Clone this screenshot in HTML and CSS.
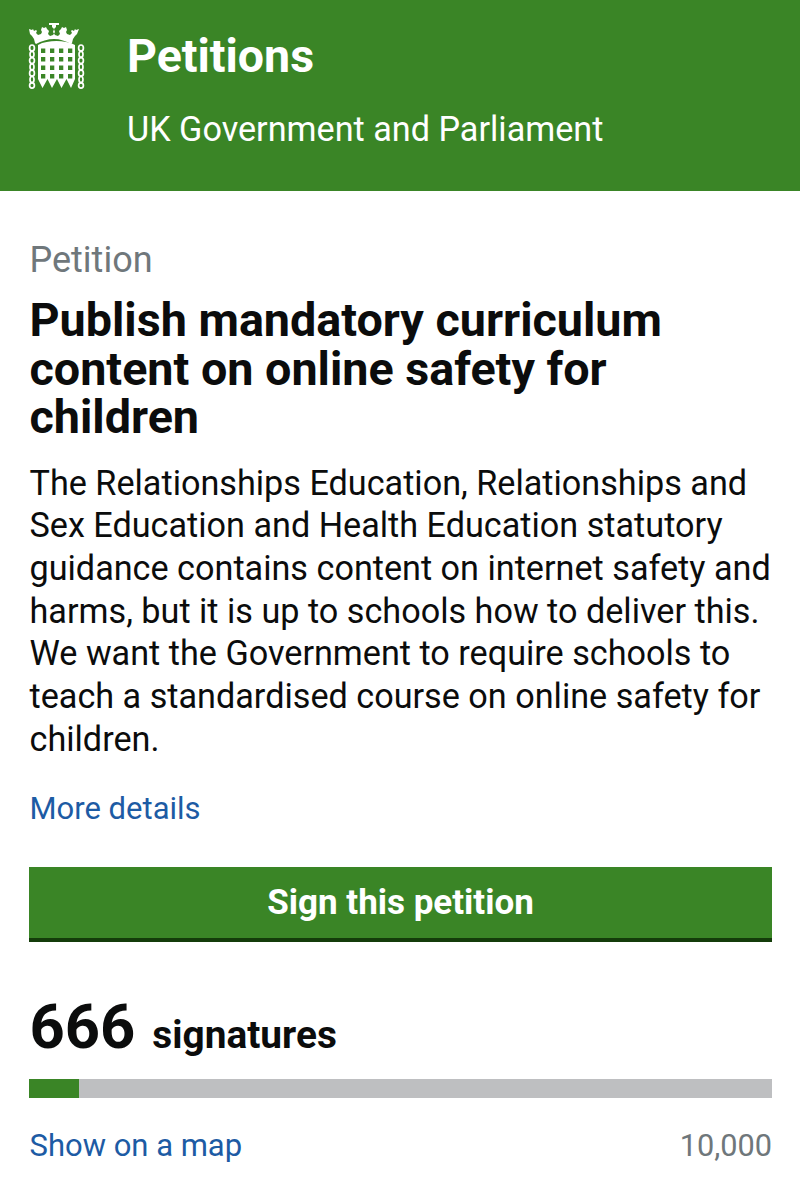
FILE: index.html
```html
<!DOCTYPE html>
<html lang="en">
<head>
<meta charset="utf-8">
<title>Petitions</title>
<link rel="stylesheet" href="styles.css">
</head>
<body>
<header class="site-header">
  <svg class="logo" viewBox="27 22 60 70" aria-hidden="true">
    <g fill="#fff">
      <path d="M29 29l3 1 1-1 1 2 2-1 1 1-1 2 2 2 3-1 1-2-1-2 1-3 2 1 2-1 1 2 2 2-1 3 2 2 3-1 2-3-1-3-2-2v-2h-3v-2h10v2h-3v2l-2 2-1 3 2 3 3 1 2-2-1-3 2-2 1-2 2 1 2-1 1 3-1 2 1 2 3 1 2-2-1-2 1-1 2 1 1-2 1 1 3-1-2 5-2 2-2 3-1 4-1 1c-5-3-11-5-17-5s-13 2-18 5l-1-1-1-4-2-3-2-2z"/>
      <path fill-rule="evenodd" d="M38 45c5-3 12-4 18.500-4s13 1 18.500 4v34l-4 9-4.500-9-5 9-4.500-9-5 9-4.500-9-5 9-4.500-9zM41 48.500v4.500h4.300v-4.500zM50 48.500v4.500h4.300v-4.500zM59 48.500v4.500h4.300v-4.500zM68 48.500v4.500h4.300v-4.500zM41 57v4.500h4.300v-4.500zM50 57v4.500h4.300v-4.500zM59 57v4.500h4.300v-4.500zM68 57v4.500h4.300v-4.500zM41 65.500v4.500h4.300v-4.500zM50 65.500v4.500h4.300v-4.500zM59 65.500v4.500h4.300v-4.500zM68 65.500v4.500h4.300v-4.500zM41 74v4.500h4.300v-4.500zM50 74v4.500h4.300v-4.500zM59 74v4.500h4.300v-4.500zM68 74v4.500h4.300v-4.500z"/>
    </g>
    <g fill="none" stroke="#fff" stroke-width="1.7">
      <ellipse cx="32" cy="48" rx="2.400" ry="3"/><ellipse cx="32" cy="54.300" rx="2" ry="3"/><ellipse cx="32" cy="60.600" rx="2.400" ry="3"/><ellipse cx="32" cy="66.900" rx="2" ry="3"/><ellipse cx="32" cy="73.200" rx="2.400" ry="3"/><ellipse cx="32" cy="79.500" rx="2" ry="3"/><ellipse cx="32" cy="85.500" rx="2.400" ry="2.600"/>
      <ellipse cx="81" cy="48" rx="2.400" ry="3"/><ellipse cx="81" cy="54.300" rx="2" ry="3"/><ellipse cx="81" cy="60.600" rx="2.400" ry="3"/><ellipse cx="81" cy="66.900" rx="2" ry="3"/><ellipse cx="81" cy="73.200" rx="2.400" ry="3"/><ellipse cx="81" cy="79.500" rx="2" ry="3"/><ellipse cx="81" cy="85.500" rx="2.400" ry="2.600"/>
    </g>
  </svg>
  <div class="brand">
    <div class="brand-title">Petitions</div>
    <div class="brand-sub">UK Government and Parliament</div>
  </div>
</header>
<main class="content">
  <div class="eyebrow">Petition</div>
  <h1 class="title">Publish mandatory curriculum content on online safety for children</h1>
  <p class="summary">The Relationships Education, Relationships and Sex Education and Health Education statutory guidance contains content on internet safety and harms, but it is up to schools how to deliver this. We want the Government to require schools to teach a standardised course on online safety for children.</p>
  <a class="link details" href="#">More details</a>
  <a class="button" href="#">Sign this petition</a>
  <div class="count"><span class="count-num">666</span><span class="count-label">signatures</span></div>
  <div class="bar"><div class="bar-fill"></div></div>
  <div class="foot">
    <a class="link" href="#">Show on a map</a>
    <span class="target">10,000</span>
  </div>
</main>
</body>
</html>
```
FILE: styles.css
```css
* { box-sizing: border-box; }
html, body { margin: 0; padding: 0; }
body {
  width: 800px;
  height: 1183px;
  overflow: hidden;
  background: #fff;
  color: #0b0c0c;
  font-family: Roboto, "Liberation Sans", sans-serif;
}
.site-header {
  background: #3a8526;
  height: 191px;
  display: flex;
  align-items: flex-start;
  padding: 22px 0 0 27px;
  color: #fff;
}
.logo { width: 60px; height: 70px; flex: none; }
.brand { margin-left: 40px; }
.brand-title { font-size: 46.5px; font-weight: 700; line-height: 50px; margin-top: 9px; }
.brand-sub { font-size: 34.2px; line-height: 40px; margin-top: 28px; }
.content { padding: 49px 28px 0 29.5px; }
.eyebrow { font-size: 36px; line-height: 40px; color: #6f777b; }
.title { font-size: 46.7px; line-height: 48.5px; font-weight: 700; margin: 16px 0 0; }
.summary { font-size: 34.2px; line-height: 42.7px; margin: 20px 0 0; }
.link { color: #1d5ba4; text-decoration: none; font-size: 31px; line-height: 40px; }
.details { display: block; margin-top: 29px; }
.button {
  display: block;
  margin: 38px 0 0 -0.5px;
  height: 75px;
  background: #3a8526;
  border-bottom: 4px solid #143c0a;
  color: #fff;
  text-align: center;
  text-decoration: none;
  font-size: 35px;
  font-weight: 700;
  line-height: 71px;
}
.count { display: flex; align-items: baseline; margin-top: 50px; height: 70px; }
.count-num { font-size: 61.5px; font-weight: 700; line-height: 70px; }
.count-label { font-size: 38.8px; font-weight: 700; margin-left: 17px; }
.bar { height: 19px; background: #bebfc1; margin: 17px 0 0 -0.5px; }
.bar-fill { width: 50px; height: 100%; background: #3a8526; }
.foot { display: flex; justify-content: space-between; align-items: baseline; margin-top: 28px; }
.target { font-size: 30.7px; color: #6f777b; line-height: 40px; }
```
